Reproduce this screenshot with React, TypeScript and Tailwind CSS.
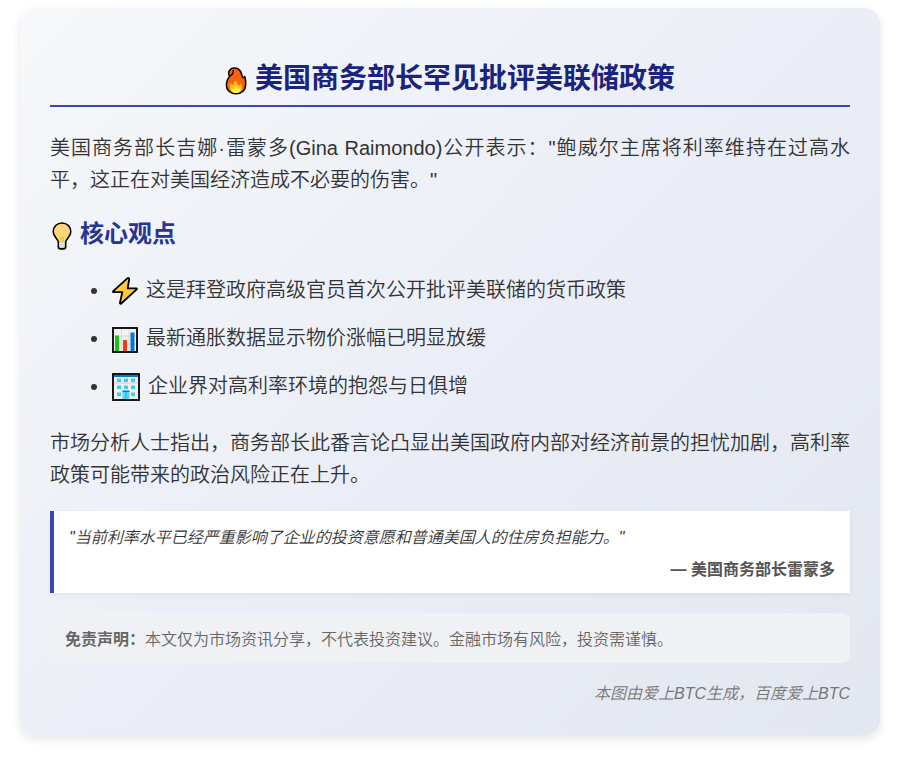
import React from 'react';

interface IconProps {
  className?: string;
}

const FireIcon: React.FC<IconProps> = ({ className }) => (
  <svg viewBox="0 0 22 28" className={className} aria-hidden="true">
    <path
      d="M7.500 1.200C12 .3 15.800 2.500 16.600 7.200C16.900 9 17.500 10.200 18.100 10.500C18.900 10.900 19.500 9.900 19.800 9.500C20.500 11.500 20.700 14 20.700 17.200C20.700 23 16.700 26.800 11 26.800C5.200 26.800 1.300 23 1.300 17.800C1.300 14.500 2.700 11.700 4.600 9.300C3.500 7.500 3.300 5 4.700 3.300C5.500 2.300 6.200 1.500 7.500 1.200Z"
      fill="#f7630c"
      stroke="#000"
      strokeWidth="1.500"
      strokeLinejoin="round"
    />
    <path d="M4.600 8.800C7 8.200 8.600 6.200 8.200 3" fill="none" stroke="#000" strokeWidth="1.300" />
    <path
      d="M4.700 18.500C4.800 17.300 5.300 16.500 6 16C6.500 17.500 7 18.200 7.800 18.300C8.700 16.500 9 15 10.500 13.500C11.700 15 12.500 17 14 18.800C14.800 18.200 15.200 17.400 15.500 16.500C17.300 18.500 17.700 21 16.500 23.200C15.200 25.400 13.300 26 11 26C7.200 26 4.300 23.500 4.700 18.500Z"
      fill="#ffc21a"
    />
    <path d="M10.800 19L13 22L15.500 21C15.500 24.600 13 26 11 26C8.500 26 6.400 24.800 6.400 21.500L8.800 22.500Z" fill="#fff04a" />
  </svg>
);

const BulbIcon: React.FC<IconProps> = ({ className }) => (
  <svg viewBox="0 0 20 28" className={className} aria-hidden="true">
    <path
      d="M10 1C5 1 1.200 4.800 1.200 9.700C1.200 14.800 5.800 16.300 6.300 20H13.700C14.200 16.300 18.800 14.800 18.800 9.700C18.800 4.800 15 1 10 1Z"
      fill="#ffd679"
    />
    <path d="M7.500 14.500L9.200 16L10 15L10.800 16L12.500 14.500M9 15.500V20M11 15.500V20" fill="none" stroke="#ffb900" strokeWidth="1" />
    <path d="M6.800 20H13.200V24.500L11.800 26.800H8.200L6.800 24.500Z" fill="#cfcfcf" />
    <path d="M7 21.500H13M7 24H13" stroke="#f2f2f2" strokeWidth="1" />
    <path
      d="M10 1C5 1 1.200 4.800 1.200 9.700C1.200 14.800 5.800 16.300 6.300 20V24.500C6.300 26 7.200 26.900 8.500 26.900H11.500C12.800 26.900 13.700 26 13.700 24.500V20C14.200 16.300 18.800 14.800 18.800 9.700C18.800 4.800 15 1 10 1Z"
      fill="none"
      stroke="#000"
      strokeWidth="1.600"
    />
  </svg>
);

const BoltIcon: React.FC<IconProps> = ({ className }) => (
  <svg viewBox="0 0 26 28" className={className} aria-hidden="true">
    <path
      d="M15.600 1.200L1.200 14.200C.8 14.700 1 15.200 1.600 15.200H10.300L7.900 26C7.900 26.800 8.700 27 9.200 26.500L24.700 12.400C25.200 11.800 24.900 11.300 24.200 11.300H15.700L17.200 2C17.200 1.100 16.300 .7 15.600 1.200Z"
      fill="#ffc83d"
      stroke="#000"
      strokeWidth="1.800"
      strokeLinejoin="round"
    />
  </svg>
);

const ChartIcon: React.FC<IconProps> = ({ className }) => (
  <svg viewBox="0 0 26 26" className={className} aria-hidden="true">
    <rect x="1" y="1" width="24" height="24" fill="#f2f2f2" stroke="#000" strokeWidth="1.800" />
    <path d="M2 9H24M2 17H24M9.500 2V24M17 2V24" stroke="#d9d9d9" strokeWidth="1" />
    <rect x="3" y="8.500" width="4" height="15.500" fill="#16c60c" />
    <rect x="11" y="13" width="4" height="11" fill="#f03a17" />
    <rect x="18.500" y="5.500" width="4" height="18.500" fill="#0078d7" />
  </svg>
);

const BuildingIcon: React.FC<IconProps> = ({ className }) => (
  <svg viewBox="0 0 28 28" className={className} aria-hidden="true">
    <rect x="1" y="1" width="26" height="26" fill="#f2f2f2" />
    <rect x="2" y="2" width="24" height="2" fill="#0078d7" />
    <path d="M2 10H26" stroke="#cccccc" strokeWidth="1" />
    <path
      d="M5 5.500H9V9H5ZM12 5.500H16V9H12ZM19 5.500H23V9H19ZM5 12.500H9V16H5ZM12 12.500H16V16H12ZM19 12.500H23V16H19ZM5 19.500H9V23H5ZM19 19.500H23V23H19Z"
      fill="#31d2f7"
    />
    <rect x="10.500" y="18" width="7" height="8.500" fill="#50d8f4" />
    <path d="M14 19V26" stroke="#28afea" strokeWidth="1" />
    <rect x="10.500" y="17.500" width="7" height="1.500" fill="#0078d7" />
    <rect x="1" y="1" width="26" height="26" fill="none" stroke="#000" strokeWidth="1.800" />
  </svg>
);

const points = [
  { icon: <BoltIcon className="mr-2 ml-0.5 inline-block h-7 w-[26px] align-[-8px]" />, text: '这是拜登政府高级官员首次公开批评美联储的货币政策' },
  { icon: <ChartIcon className="mr-2 ml-0.5 inline-block h-[26px] w-[26px] align-[-8px]" />, text: '最新通胀数据显示物价涨幅已明显放缓' },
  { icon: <BuildingIcon className="mr-2 ml-0.5 inline-block h-7 w-7 align-[-8px]" />, text: '企业界对高利率环境的抱怨与日俱增' },
];

const App: React.FC = () => {
  return (
    <main className="px-5 pt-2 pb-8 font-['Liberation_Sans','Noto_Sans_CJK_SC',sans-serif] text-[#333]">
      <article
        lang="zh-CN"
        className="rounded-[15px] bg-[linear-gradient(135deg,#f6f8fa_0%,#ebeef6_50%,#e3e7f0_100%)] px-[30px] pt-12 pb-7 text-xl leading-8 font-[350] shadow-[0_4px_10px_rgba(0,0,0,0.1)]"
      >
        <h1 className="flex items-center justify-center gap-2 border-b-2 border-[#3949ab] pb-1 text-[28px] leading-[45px] font-bold text-[#1a237e]">
          <FireIcon className="mt-1 h-7 w-[22px]" />
          美国商务部长罕见批评美联储政策
        </h1>

        <p className="mt-[25px] text-justify">
          美国商务部长吉娜·雷蒙多(Gina Raimondo)公开表示："鲍威尔主席将利率维持在过高水平，这正在对美国经济造成不必要的伤害。"
        </p>

        <h2 className="mt-[18px] flex items-center gap-2 pl-0.5 text-2xl leading-10 font-bold text-[#283593]">
          <BulbIcon className="mt-1 h-7 w-5" />
          核心观点
        </h2>

        <ul className="mt-5 list-disc space-y-4 pl-[60px]">
          {points.map((point) => (
            <li key={point.text}>
              {point.icon}
              {point.text}
            </li>
          ))}
        </ul>

        <p className="mt-[25px] text-justify">
          市场分析人士指出，商务部长此番言论凸显出美国政府内部对经济前景的担忧加剧，高利率政策可能带来的政治风险正在上升。
        </p>

        <blockquote className="mt-5 border-l-4 border-[#3949ab] bg-white px-[15px] pt-3.5 pb-2.5 text-base leading-[26px] shadow-[0_2px_5px_rgba(0,0,0,0.05)]">
          <p className="italic">"当前利率水平已经严重影响了企业的投资意愿和普通美国人的住房负担能力。"</p>
          <footer className="mt-1.5 text-right font-bold text-[#555]">— 美国商务部长雷蒙多</footer>
        </blockquote>

        <p className="mt-5 rounded-lg bg-[#f0f1f5] px-[15px] pt-3.5 pb-2.5 text-base leading-[26px] text-[#666]">
          <strong className="font-bold">免责声明：</strong>
          本文仅为市场资讯分享，不代表投资建议。金融市场有风险，投资需谨慎。
        </p>

        <p className="mt-[18px] text-right text-base leading-[26px] text-[#777] italic">本图由爱上BTC生成，百度爱上BTC</p>
      </article>
    </main>
  );
};

export default App;
